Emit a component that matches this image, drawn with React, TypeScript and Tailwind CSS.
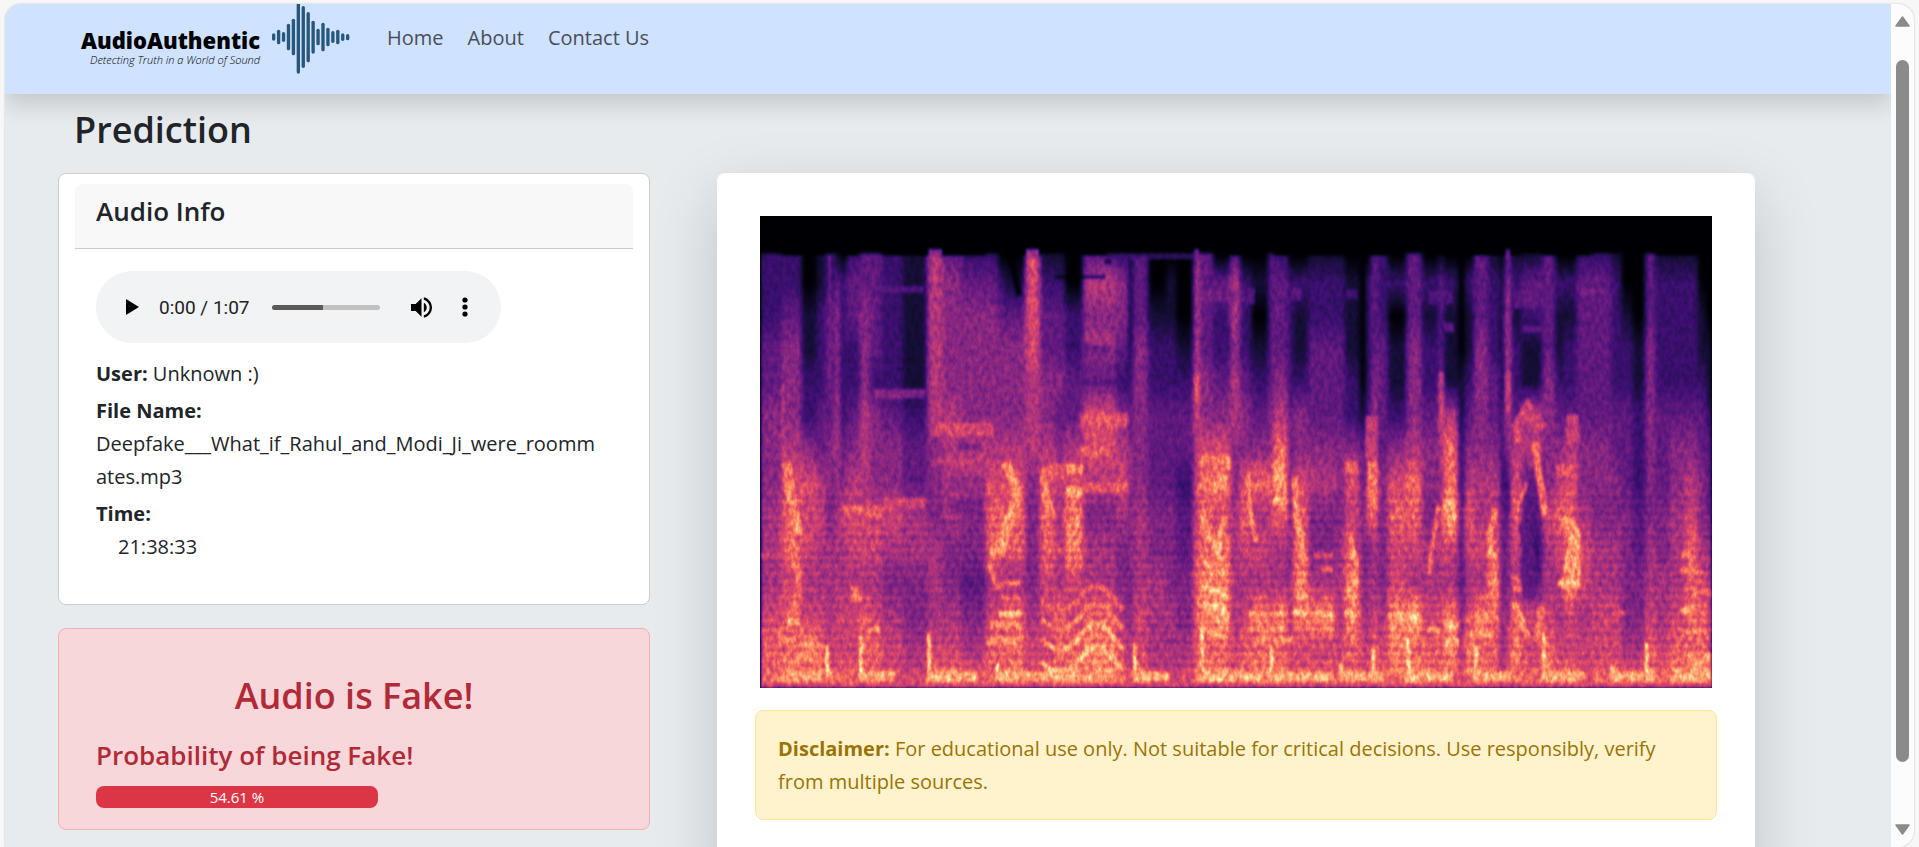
import React from "react";

const LEVEL_ROWS = [120, 200, 300, 400, 500, 600, 700, 800, 900, 1000, 1100, 1200, 1300, 1400];

// [start of the time slice, loudness 0-9 at each of LEVEL_ROWS]
const SLICES: [number, string][] = [
  [0, "22233444555677"],
  [65, "22344456776778"],
  [125, "00112246665687"],
  [170, "11222335655677"],
  [195, "22333344455567"],
  [225, "13444554555667"],
  [240, "02222234655667"],
  [260, "23322345665667"],
  [300, "33444555665777"],
  [330, "33332444665677"],
  [365, "22222344654566"],
  [430, "11111233554456"],
  [502, "55555544455568"],
  [550, "34444555544568"],
  [605, "23444455443457"],
  [678, "23444456775677"],
  [715, "02344456775677"],
  [735, "01344456775778"],
  [797, "66665554444566"],
  [840, "12334456776667"],
  [885, "12334345555778"],
  [915, "00223356886678"],
  [970, "35443665455788"],
  [1070, "24432456544567"],
  [1105, "11112344444456"],
  [1120, "33344444555668"],
  [1165, "00122333445556"],
  [1220, "01122333444556"],
  [1250, "00012332334456"],
  [1302, "45555656677777"],
  [1320, "33334467778878"],
  [1360, "03223468688978"],
  [1412, "35545544555567"],
  [1440, "02223446765677"],
  [1475, "01012347565878"],
  [1527, "33333446655678"],
  [1540, "23334578755878"],
  [1585, "02222333444567"],
  [1600, "02112446778867"],
  [1645, "12233345445867"],
  [1730, "12233344455567"],
  [1755, "01112246668877"],
  [1800, "00000133444566"],
  [1820, "02222356745567"],
  [1835, "33334447755678"],
  [1855, "22233334444567"],
  [1885, "02011246766887"],
  [1941, "33344457765979"],
  [1986, "02122344455677"],
  [2038, "13334554665677"],
  [2052, "02111577965887"],
  [2095, "00001122333456"],
  [2116, "02112345765687"],
  [2143, "33344445565878"],
  [2186, "12223345678777"],
  [2221, "01111222333445"],
  [2236, "34555542344567"],
  [2254, "12122356765787"],
  [2286, "13211553323667"],
  [2348, "33334444655678"],
  [2386, "02112345765567"],
  [2411, "02122356778668"],
  [2452, "23333344566566"],
  [2496, "23333344455667"],
  [2556, "12222334455668"],
  [2586, "00122333444457"],
  [2620, "00011222334457"],
  [2658, "33344444455678"],
  [2686, "12222333445567"],
  [2731, "12222344555678"],
  [2776, "12222345677778"],
  [2816, "00112334456778"],
  [2840, "00011233456778"],
];

// [x, y, width, height, loudness]
const PATCHES: [number, number, number, number, number][] = [
  [520, 620, 180, 40, 6.3],
  [340, 520, 155, 28, 4.4],
  [360, 210, 130, 20, 3],
  [250, 868, 120, 34, 6.8],
  [370, 845, 130, 34, 6],
  [520, 722, 150, 24, 5.6],
  [560, 780, 116, 50, 4],
  [570, 850, 100, 40, 3.4],
  [590, 684, 70, 20, 3],
  [270, 1110, 36, 50, 7.6],
  [65, 500, 8, 230, 5.5],
  [205, 120, 8, 400, 3.6],
  [715, 1184, 66, 22, 9.6],
  [720, 1095, 60, 16, 7.8],
  [722, 1140, 60, 14, 8],
  [725, 1030, 70, 50, 5],
  [690, 1216, 90, 20, 8.4],
  [680, 1262, 115, 24, 8.4],
  [690, 985, 45, 34, 8.8],
  [845, 745, 70, 50, 7],
  [918, 745, 52, 30, 8.4],
  [918, 810, 52, 36, 9],
  [85, 1208, 34, 22, 9],
  [60, 1262, 50, 18, 8],
  [110, 1280, 80, 18, 8.4],
  [70, 1320, 120, 14, 8],
  [90, 1370, 95, 24, 8.8],
  [328, 1232, 34, 18, 8.6],
  [0, 1240, 90, 14, 7.2],
  [0, 1010, 66, 16, 6.2],
  [975, 215, 70, 30, 5],
  [975, 340, 90, 50, 4.8],
  [970, 388, 80, 20, 3],
  [960, 590, 145, 44, 6.6],
  [960, 695, 85, 24, 7],
  [960, 800, 145, 30, 7],
  [1040, 112, 260, 18, 2.2],
  [885, 178, 150, 10, 0],
  [1035, 130, 20, 14, 0],
  [1320, 222, 135, 36, 3.6],
  [1302, 470, 18, 90, 6.6],
  [1320, 720, 90, 26, 7.6],
  [1320, 800, 90, 26, 7.6],
  [1400, 730, 16, 30, 8.4],
  [1540, 842, 42, 26, 9],
  [1460, 215, 26, 50, 3],
  [1595, 215, 30, 40, 3.2],
  [1600, 1182, 44, 20, 9],
  [1604, 1130, 40, 20, 8.2],
  [1682, 1184, 40, 20, 9.8],
  [1680, 1230, 46, 16, 8.4],
  [1684, 1050, 36, 20, 7.6],
  [1660, 1010, 60, 16, 7],
  [1465, 1186, 110, 16, 8.6],
  [1465, 1232, 110, 16, 8.2],
  [1490, 1262, 120, 18, 8],
  [1755, 1184, 44, 22, 9],
  [1760, 1010, 36, 22, 8.6],
  [1755, 735, 40, 40, 7.2],
  [1822, 735, 32, 140, 7.6],
  [1818, 600, 36, 130, 6],
  [1885, 1190, 46, 26, 9],
  [1950, 1186, 26, 26, 9.8],
  [1760, 220, 35, 30, 2.6],
  [2006, 225, 74, 40, 2.8],
  [2054, 320, 30, 28, 3.4],
  [2037, 470, 16, 180, 5.8],
  [2050, 852, 40, 32, 9],
  [2052, 1218, 46, 22, 8.8],
  [2056, 1268, 44, 24, 8.8],
  [2005, 1232, 36, 20, 8.8],
  [2118, 1200, 100, 20, 8.2],
  [2118, 1246, 90, 18, 8],
  [2180, 1010, 34, 20, 8.4],
  [2182, 1090, 34, 20, 8.2],
  [2185, 1130, 34, 18, 8],
  [2262, 222, 86, 56, 3.2],
  [2286, 330, 60, 20, 3.4],
  [2236, 470, 18, 126, 5.6],
  [2420, 595, 38, 90, 6.2],
  [2390, 745, 64, 40, 6.8],
  [2452, 215, 80, 20, 3.6],
  [2395, 1092, 70, 22, 9],
  [2766, 1008, 26, 20, 8.4],
  [2760, 1058, 70, 16, 7.8],
  [2800, 1120, 56, 18, 7.6],
  [2764, 1172, 44, 24, 9],
  [2780, 1236, 60, 18, 9],
  [2786, 1310, 70, 90, 8.2],
  [2560, 1184, 36, 16, 7.2],
  [2750, 1236, 106, 12, 7.2],
];

// [points, stroke width, loudness]
const RIDGES: [string, number, number][] = [
  ["80,740 90,830 110,920 118,960", 28, 8],
  ["90,960 120,1100 100,1200", 22, 7.4],
  ["735,740 765,800 772,850 745,920 722,1000", 30, 8.4],
  ["850,780 860,850 878,900", 24, 8],
  ["700,1010 690,1060 720,1120", 18, 7.6],
  ["748,110 766,180 778,240", 18, 0],
  ["845,920 880,980 905,1010", 12, 7],
  ["1325,880 1345,960 1372,1010 1395,900", 16, 8.6],
  ["1326,1110 1400,1140", 20, 9],
  ["1326,1165 1400,1190", 22, 9],
  ["1326,1040 1400,1070", 18, 8.6],
  ["1325,1240 1405,1270", 14, 8.4],
  ["1465,760 1470,870 1490,980", 14, 8],
  ["1555,740 1560,800", 34, 8.4],
  ["1604,780 1610,900 1634,1040", 18, 8.4],
  ["1765,950 1790,1040 1785,1140", 16, 8.2],
  ["2036,870 2020,980 2008,1080", 12, 8],
  ["2210,880 2190,960 2195,1040", 18, 8],
  ["2268,640 2306,575 2350,640", 34, 6],
  ["2270,640 2276,680", 16, 7.8],
  ["2326,680 2336,760 2350,850 2356,900", 22, 8],
  ["2300,800 2270,890", 14, 7],
  ["2290,920 2310,1000 2306,1150", 34, 3],
  ["2262,1160 2280,1200 2306,1265", 20, 8.4],
  ["2346,1170 2330,1280", 22, 7.6],
  ["2266,1080 2276,1130", 24, 7.4],
  ["2410,900 2446,950 2434,1040 2420,1120", 34, 8.4],
  ["2460,960 2430,1140", 8, 9],
  ["2444,930 2460,1000 2456,1120", 10, 8.6],
];

const HARMONICS: [number, number][] = [
  [1185, 7],
  [1240, 7.8],
  [1300, 8.8],
  [1368, 9.2],
];

// [x, top, length of the low band that follows]
const ONSETS: [number, number, number][] = [
  [196, 1290, 20],
  [298, 1260, 110],
  [502, 1250, 150],
  [708, 1340, 250],
  [1120, 1280, 110],
  [1322, 1240, 190],
  [1530, 1290, 190],
  [1740, 1340, 90],
  [1835, 1300, 40],
  [1941, 1270, 140],
  [2144, 1290, 110],
  [2348, 1250, 130],
  [2552, 1350, 100],
  [2656, 1280, 30],
  [2746, 1360, 110],
];

const grey = (level: number) => {
  const v = Math.round((level / 10) * 255);
  return `rgb(${v},${v},${v})`;
};

const WIDTH = 2856;
const HEIGHT = 1416;

function Spectrogram() {
  return (
    <svg
      viewBox={`0 0 ${WIDTH} ${HEIGHT}`}
      preserveAspectRatio="none"
      className="block aspect-[952/472] w-full bg-black"
      role="img"
      aria-label="Spectrogram"
    >
      <defs>
        <filter id="magma" x="0" y="0" width="100%" height="100%" colorInterpolationFilters="sRGB">
          <feGaussianBlur in="SourceGraphic" stdDeviation="3 4" result="soft" />
          <feTurbulence type="fractalNoise" baseFrequency="0.075 0.045" numOctaves="2" seed="7" result="t" />
          <feColorMatrix in="t" type="matrix" values="1 0 0 0 0  1 0 0 0 0  1 0 0 0 0  0 0 0 0 1" result="grain" />
          <feComposite in="soft" in2="grain" operator="arithmetic" k1="0.56" k2="0.69" k3="0" k4="0" result="mix" />
          <feComponentTransfer in="mix">
            <feFuncR type="table" tableValues="0 .08 .23 .39 .55 .72 .87 .97 .996 .996 .988" />
            <feFuncG type="table" tableValues="0 .055 .06 .10 .16 .216 .286 .44 .62 .81 .99" />
            <feFuncB type="table" tableValues=".016 .21 .44 .50 .506 .475 .41 .36 .43 .57 .75" />
          </feComponentTransfer>
        </filter>
        <filter id="smear" x="0" y="0" width="100%" height="100%" colorInterpolationFilters="sRGB">
          <feGaussianBlur stdDeviation="6 0" />
        </filter>
        <pattern id="ripples" width="40" height="24" patternUnits="userSpaceOnUse">
          <rect width="40" height="10" fill="#000" opacity="0.13" />
        </pattern>
        {SLICES.map(([x, levels]) => (
          <linearGradient key={x} id={`slice-${x}`} x1="0" y1="0" x2="0" y2={HEIGHT} gradientUnits="userSpaceOnUse">
            <stop offset={(x % 3 === 0 ? 106 : 118) / HEIGHT} stopColor="#000" />
            {LEVEL_ROWS.map((row, i) => (
              <stop key={row} offset={row / HEIGHT} stopColor={grey(Number(levels[i]))} />
            ))}
          </linearGradient>
        ))}
      </defs>
      <g filter="url(#magma)">
        <rect width={WIDTH} height={HEIGHT} fill="#000" />
        <g filter="url(#smear)">
          {SLICES.map(([x], i) => {
            const end = i + 1 < SLICES.length ? SLICES[i + 1][0] : WIDTH;
            return <rect key={x} x={x} y="0" width={end - x + 1} height={HEIGHT} fill={`url(#slice-${x})`} />;
          })}
        </g>
        <rect x="506" y="100" width="40" height="24" fill={grey(4)} />
        <rect x="799" y="100" width="38" height="24" fill={grey(4.5)} />
        <rect x="1304" y="100" width="14" height="24" fill={grey(3.5)} />
        <rect x="2238" y="100" width="14" height="24" fill={grey(3)} />
        <rect y="840" width={WIDTH} height="520" fill="url(#ripples)" />
        {PATCHES.map(([x, y, w, h, level], i) => (
          <rect key={i} x={x} y={y} width={w} height={h} fill={grey(level)} opacity="0.75" />
        ))}
        {RIDGES.map(([points, w, level], i) => (
          <polyline key={i} points={points} fill="none" stroke={grey(level)} strokeWidth={w} opacity="0.8" />
        ))}
        {HARMONICS.map(([b, level]) => (
          <path
            key={b}
            d={`M845 ${b - 30} Q870 ${b - 4} 900 ${b} T970 ${b - 50} Q1010 ${b - 100} 1050 ${b - 50} T1090 ${b}`}
            fill="none"
            stroke={grey(level)}
            strokeWidth="16"
            opacity="0.85"
          />
        ))}
        {ONSETS.map(([x, top, band]) => (
          <g key={x}>
            <rect x={x} y={top} width="10" height={1390 - top} fill={grey(9.6)} />
            <rect x={x} y="1368" width={band} height="28" fill={grey(8.5)} />
          </g>
        ))}
        <rect y="1402" width={WIDTH} height="14" fill={grey(5.8)} />
        <rect width="3" height={HEIGHT} fill="#000" />
      </g>
    </svg>
  );
}

// [top, bottom] of each bar
const BARS = [
  [89, 109], [78, 120], [85, 113], [60, 138], [45, 153], [-3, 208], [7, 191], [25, 174],
  [51, 148], [75, 123], [57, 141], [72, 126], [82, 116], [78, 120], [89, 110], [91, 108],
];

function Logo() {
  return (
    <a href="#home" className="flex h-[70px]">
      <span className="flex flex-col items-end pt-[22px] text-black">
        <span className="text-[22px] leading-7 font-extrabold">AudioAuthentic</span>
        <span className="text-[11px] leading-3 font-light italic">Detecting Truth in a World of Sound</span>
      </span>
      <svg viewBox="0 0 234 210" className="ml-3 h-[70px] w-[78px]" aria-hidden="true">
        {BARS.map(([top, bottom], i) => (
          <line
            key={i}
            x1={5 + i * 14.8}
            x2={5 + i * 14.8}
            y1={top + 4}
            y2={bottom - 4}
            stroke="#27587c"
            strokeWidth="10"
            strokeLinecap="round"
          />
        ))}
      </svg>
    </a>
  );
}

function Player() {
  return (
    <div className="flex h-[72px] w-[405px] max-w-full items-center rounded-full bg-[#f1f3f4] pl-[30px]">
      <button type="button" aria-label="Play" className="flex">
        <svg viewBox="0 0 13 16" className="h-4 w-[13px]">
          <path d="M0 0 13 8 0 16z" />
        </svg>
      </button>
      <span className="ml-5 font-[Roboto] text-[19px] text-[#222]">0:00 / 1:07</span>
      <input
        type="range"
        aria-label="Position"
        defaultValue={0}
        className="ml-[22px] h-[5px] w-[108px] appearance-none rounded-full bg-[linear-gradient(to_right,#5a5a5a_47%,#c1c1c1_47%)] [&::-webkit-slider-thumb]:size-0 [&::-webkit-slider-thumb]:appearance-none"
      />
      <button type="button" aria-label="Mute" className="ml-[31px] flex">
        <svg viewBox="3 3 18 18" className="h-[21px] w-[21px]">
          <path d="M3 9v6h4l5 5V4L7 9H3zm13.500 3c0-1.770-1.020-3.290-2.500-4.030v8.050c1.480-.73 2.500-2.250 2.500-4.020zM14 3.230v2.060c2.890.86 5 3.540 5 6.710s-2.110 5.850-5 6.710v2.060c4.010-.91 7-4.490 7-8.770s-2.990-7.860-7-8.770z" />
        </svg>
      </button>
      <button type="button" aria-label="More options" className="ml-[30px] flex">
        <svg viewBox="0 0 6 20" className="h-5 w-1.5">
          <circle cx="3" cy="3" r="2.600" />
          <circle cx="3" cy="10" r="2.600" />
          <circle cx="3" cy="17" r="2.600" />
        </svg>
      </button>
    </div>
  );
}

const PROBABILITY = 54.61;

export default function App() {
  return (
    <div className="h-screen bg-[#f7f7f7] pt-1 pr-[5px] pl-[5px] font-['Open_Sans',sans-serif] text-[20px] leading-[33px] text-[#212529]">
      <div className="flex h-full overflow-hidden rounded-t-2xl rounded-br-2xl bg-[#fcfcfc] shadow-[0_0_2px_#bbb]">
        <div className="min-w-0 flex-1 overflow-hidden bg-[#e7ebee]">
          <header className="relative z-10 flex h-[90px] bg-[#cfe2ff] pl-[76px] shadow-[0_11px_22px_rgba(0,0,0,0.15)]">
            <Logo />
            <nav className="flex gap-6 pt-[17px] pl-[37px] text-[#484f59]">
              <a href="#home">Home</a>
              <a href="#about">About</a>
              <a href="#contact">Contact Us</a>
            </nav>
          </header>

          <main className="pl-[53px]">
            <h1 className="pt-[13px] pl-4 text-[36px] leading-[46px] font-semibold">Prediction</h1>
            <div className="mt-5 grid grid-cols-[32.3%_56.6%] items-start gap-x-[67px]">
              <div className="flex flex-col gap-[23px]">
                <section className="rounded-lg border border-[#cbcdcf] bg-white px-4 pt-2.5 pb-[41px]">
                  <h2 className="h-[65px] rounded-t-lg border-b border-[#c8c8c8] bg-[#f8f8f8] px-[21px] pt-[11px] text-[26px] font-semibold">
                    Audio Info
                  </h2>
                  <div className="px-[21px] pt-[22px]">
                    <Player />
                    <p className="mt-3.5">
                      <b>User:</b> Unknown :)
                    </p>
                    <p className="mt-1">
                      <b>File Name:</b>
                      <br />
                      Deepfake___What_if_Rahul_and_Modi_Ji_were_roomm
                      <br />
                      ates.mp3
                    </p>
                    <p className="mt-1">
                      <b>Time:</b>
                    </p>
                    <p className="pl-[22px]">21:38:33</p>
                  </div>
                </section>

                <section className="rounded-lg border border-[#f1aeb5] bg-[#f8d7da] px-[37px] pt-[43px] pb-[21px] text-[#b02a37]">
                  <h2 className="text-center text-[36px] leading-[48px] font-semibold">Audio is Fake!</h2>
                  <h3 className="mt-[19px] text-[26px] font-semibold">Probability of being Fake!</h3>
                  <div
                    role="progressbar"
                    aria-label="Probability of being fake"
                    aria-valuenow={PROBABILITY}
                    className="mt-3.5 h-[22px] rounded-lg bg-[#dc3545] text-center text-[15px] leading-[22px] text-white"
                    style={{ width: `${PROBABILITY}%` }}
                  >
                    {`${PROBABILITY} %`}
                  </div>
                </section>
              </div>

              <section className="rounded-lg bg-white px-[38px] pt-[43px] pb-16 shadow-[0_22px_65px_rgba(0,0,0,0.17)]">
                <div className="px-[5px]">
                  <Spectrogram />
                </div>
                <p
                  role="alert"
                  className="mt-[22px] rounded-lg border border-[#ffe69c] bg-[#fff3cd] px-[22px] py-[21px] text-[#997404]"
                >
                  <b>Disclaimer:</b> For educational use only. Not suitable for critical decisions. Use responsibly,
                  verify <span className="inline-block">from multiple sources.</span>
                </p>
              </section>
            </div>
          </main>
        </div>

        <div className="flex w-[23px] flex-col items-center pt-3 pb-3" aria-hidden="true">
          <svg viewBox="0 0 15 11" className="h-[11px] w-[15px]">
            <path d="M7.500 1 14 10H1z" fill="#8b8b8b" stroke="#8b8b8b" strokeWidth="1.500" strokeLinejoin="round" />
          </svg>
          <div className="mt-[33px] w-[13px] flex-1 rounded-full bg-[#8b8b8b]" />
          <svg viewBox="0 0 15 11" className="mt-[62px] h-[11px] w-[15px]">
            <path d="M7.500 10 14 1H1z" fill="#8b8b8b" stroke="#8b8b8b" strokeWidth="1.500" strokeLinejoin="round" />
          </svg>
        </div>
      </div>
    </div>
  );
}
